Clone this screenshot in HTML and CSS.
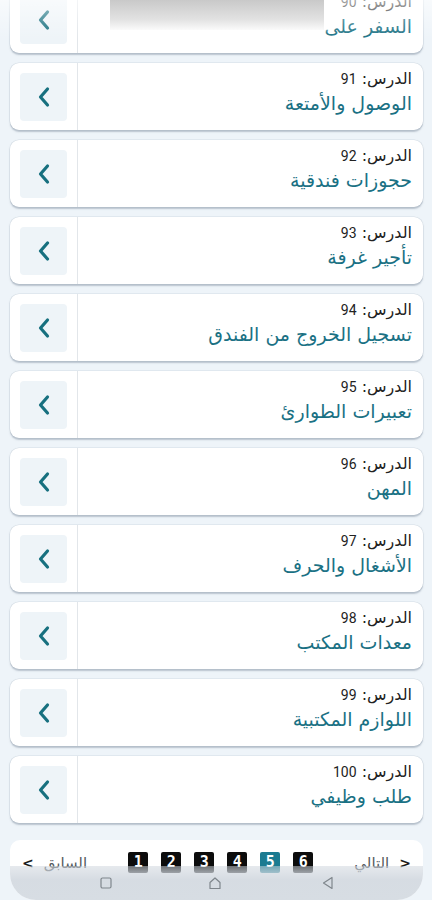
FILE: index.html
```html
<!DOCTYPE html>
<html lang="ar">
<head>
<meta charset="utf-8">
<link rel="stylesheet" href="styles.css">
</head>
<body>
<div class="screen">
  <div class="list">
    <div class="card"><div class="btn"><svg viewBox="0 0 14 22" width="14" height="22"><path d="M10.5 3 L3.5 11 L10.5 19"/></svg></div><div class="divider"></div><div class="txt" dir="rtl"><div class="lbl">الدرس: <span class="num">90</span></div><div class="ttl">السفر على</div></div></div>
    <div class="card"><div class="btn"><svg viewBox="0 0 14 22" width="14" height="22"><path d="M10.5 3 L3.5 11 L10.5 19"/></svg></div><div class="divider"></div><div class="txt" dir="rtl"><div class="lbl">الدرس: <span class="num">91</span></div><div class="ttl">الوصول والأمتعة</div></div></div>
    <div class="card"><div class="btn"><svg viewBox="0 0 14 22" width="14" height="22"><path d="M10.5 3 L3.5 11 L10.5 19"/></svg></div><div class="divider"></div><div class="txt" dir="rtl"><div class="lbl">الدرس: <span class="num">92</span></div><div class="ttl">حجوزات فندقية</div></div></div>
    <div class="card"><div class="btn"><svg viewBox="0 0 14 22" width="14" height="22"><path d="M10.5 3 L3.5 11 L10.5 19"/></svg></div><div class="divider"></div><div class="txt" dir="rtl"><div class="lbl">الدرس: <span class="num">93</span></div><div class="ttl">تأجير غرفة</div></div></div>
    <div class="card"><div class="btn"><svg viewBox="0 0 14 22" width="14" height="22"><path d="M10.5 3 L3.5 11 L10.5 19"/></svg></div><div class="divider"></div><div class="txt" dir="rtl"><div class="lbl">الدرس: <span class="num">94</span></div><div class="ttl">تسجيل الخروج من الفندق</div></div></div>
    <div class="card"><div class="btn"><svg viewBox="0 0 14 22" width="14" height="22"><path d="M10.5 3 L3.5 11 L10.5 19"/></svg></div><div class="divider"></div><div class="txt" dir="rtl"><div class="lbl">الدرس: <span class="num">95</span></div><div class="ttl">تعبيرات الطوارئ</div></div></div>
    <div class="card"><div class="btn"><svg viewBox="0 0 14 22" width="14" height="22"><path d="M10.5 3 L3.5 11 L10.5 19"/></svg></div><div class="divider"></div><div class="txt" dir="rtl"><div class="lbl">الدرس: <span class="num">96</span></div><div class="ttl">المهن</div></div></div>
    <div class="card"><div class="btn"><svg viewBox="0 0 14 22" width="14" height="22"><path d="M10.5 3 L3.5 11 L10.5 19"/></svg></div><div class="divider"></div><div class="txt" dir="rtl"><div class="lbl">الدرس: <span class="num">97</span></div><div class="ttl">الأشغال والحرف</div></div></div>
    <div class="card"><div class="btn"><svg viewBox="0 0 14 22" width="14" height="22"><path d="M10.5 3 L3.5 11 L10.5 19"/></svg></div><div class="divider"></div><div class="txt" dir="rtl"><div class="lbl">الدرس: <span class="num">98</span></div><div class="ttl">معدات المكتب</div></div></div>
    <div class="card"><div class="btn"><svg viewBox="0 0 14 22" width="14" height="22"><path d="M10.5 3 L3.5 11 L10.5 19"/></svg></div><div class="divider"></div><div class="txt" dir="rtl"><div class="lbl">الدرس: <span class="num">99</span></div><div class="ttl">اللوازم المكتبية</div></div></div>
    <div class="card"><div class="btn"><svg viewBox="0 0 14 22" width="14" height="22"><path d="M10.5 3 L3.5 11 L10.5 19"/></svg></div><div class="divider"></div><div class="txt" dir="rtl"><div class="lbl">الدرس: <span class="num">100</span></div><div class="ttl">طلب وظيفي</div></div></div>
  </div>

  <div class="pager">
    <div class="pager-row">
      <div class="nav-link"><span class="chev">&lt;</span><span dir="rtl">السابق</span></div>
      <div class="pages">
        <span class="pg">1</span><span class="pg">2</span><span class="pg">3</span><span class="pg">4</span><span class="pg active">5</span><span class="pg">6</span>
      </div>
      <div class="nav-link"><span dir="rtl">التالي</span><span class="chev">&gt;</span></div>
    </div>
    <div class="sysbar">
      <svg class="sys-ic sq" viewBox="0 0 14 14" width="14" height="14"><rect x="2" y="2" width="10" height="10" rx="1.5"/></svg>
      <svg class="sys-ic home" viewBox="0 0 14 14" width="14" height="14"><path d="M2 12.5 V6.5 L7 2 L12 6.5 V12.5 Z"/></svg>
      <svg class="sys-ic back" viewBox="0 0 14 14" width="14" height="14"><path d="M11 1.5 V12.5 L2.5 7 Z"/></svg>
    </div>
  </div>

  <div class="status-haze"></div>
  <div class="status-box"></div>
</div>
</body>
</html>
```

FILE: styles.css
```css
html, body {
  margin: 0;
  padding: 0;
}
body {
  background: #eef4f9;
  font-family: "DejaVu Sans", "Noto Sans", sans-serif;
}
.screen {
  position: relative;
  width: 432px;
  height: 900px;
  overflow: hidden;
  background: #eef4f9;
}
.list {
  display: flex;
  flex-direction: column;
  gap: 10px;
  margin-top: -14px;
  padding: 0 9px 0 10px;
}
.card {
  height: 67px;
  background: #ffffff;
  border-radius: 9px;
  box-shadow: 0 1.5px 1.5px rgba(135, 150, 165, 0.5), 0 0 0 0.5px rgba(200, 210, 220, 0.6);
  display: flex;
  align-items: stretch;
  box-sizing: border-box;
}
.btn {
  width: 47px;
  height: 48px;
  margin: 10px 10px 0 10px;
  background: #eef4f8;
  border-radius: 4px;
  display: flex;
  align-items: center;
  justify-content: center;
  flex: none;
}
.btn svg path {
  fill: none;
  stroke: #17707f;
  stroke-width: 3.2;
  stroke-linecap: round;
  stroke-linejoin: round;
}
.divider {
  width: 1px;
  flex: none;
  background: #e2e6ea;
}
.txt {
  flex: 1;
  min-width: 0;
  padding: 6px 11px 0 0;
  text-align: right;
}
.lbl {
  font-size: 16px;
  line-height: 20px;
  color: #222222;
}
.num {
  font-family: "Roboto", "DejaVu Sans", sans-serif;
  font-size: 14px;
}
.ttl {
  margin-top: 2px;
  font-size: 19px;
  line-height: 24px;
  color: #1a7184;
}
.pager {
  position: relative;
  margin: 17px 9px 0 10px;
  height: 60px;
  background: #ffffff;
  border-radius: 10px 10px 26px 26px;
  overflow: hidden;
}
.pager-row {
  display: flex;
  align-items: center;
  justify-content: space-between;
  padding: 12px 12px 0 12px;
  height: 21px;
}
.nav-link {
  display: flex;
  align-items: center;
  gap: 10px;
  font-size: 15px;
  color: #555a5e;
}
.chev {
  font-family: "DejaVu Sans", sans-serif;
  font-weight: bold;
  font-size: 14px;
  color: #1c1c1c;
}
.pages {
  display: flex;
  gap: 13px;
}
.pg {
  width: 20px;
  height: 21px;
  background: #0c0c0c;
  border-radius: 2px;
  color: #ffffff;
  font-family: "DejaVu Sans Mono", monospace;
  font-weight: bold;
  font-size: 15px;
  line-height: 21px;
  text-align: center;
}
.pg.active {
  background: #1b7b91;
}
.sysbar {
  position: absolute;
  left: 0;
  right: 0;
  bottom: 0;
  height: 34px;
  background: linear-gradient(to bottom, rgba(205, 212, 220, 0.5), rgba(212, 218, 225, 0.95) 40%, rgba(215, 221, 227, 1));
}
.sys-ic {
  position: absolute;
  top: 10px;
  fill: none;
  stroke: #7f868c;
  stroke-width: 1.2;
  stroke-linejoin: round;
}
.sys-ic.sq { left: 89px; }
.sys-ic.home { left: 198px; }
.sys-ic.back { left: 311px; }
.status-haze {
  position: absolute;
  left: 0;
  top: 0;
  width: 432px;
  height: 40px;
  background: linear-gradient(to bottom, rgba(255, 255, 255, 0.6), rgba(255, 255, 255, 0.2) 60%, rgba(255, 255, 255, 0));
  pointer-events: none;
}
.status-box {
  position: absolute;
  left: 110px;
  top: 0;
  width: 214px;
  height: 30px;
  background: linear-gradient(to bottom, #c9c9c9, #e2e2e2 65%, rgba(250, 250, 250, 0.85));
  box-shadow: -3px 0 3px rgba(255, 255, 255, 0.9), 3px 0 3px rgba(255, 255, 255, 0.9);
  pointer-events: none;
}
```
